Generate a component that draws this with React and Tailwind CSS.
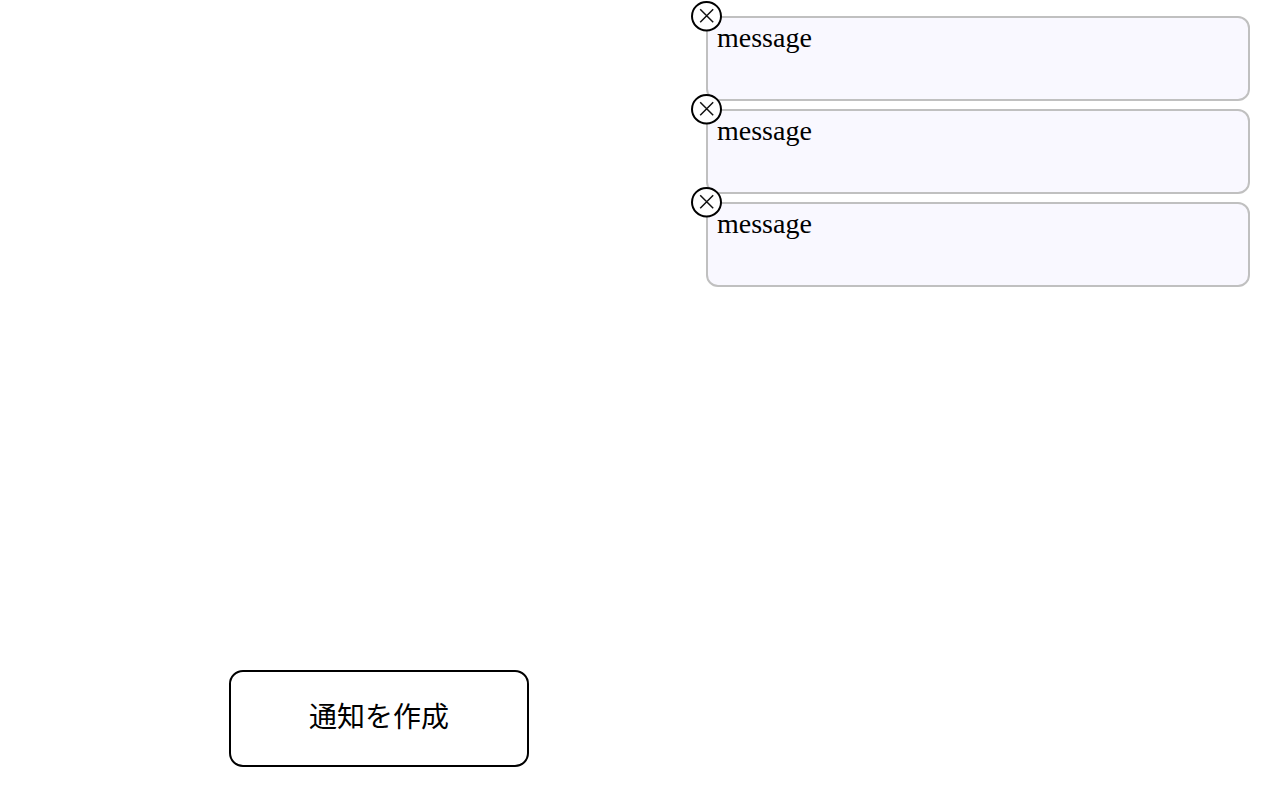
import React, { useState } from 'react';

const CloseIcon = () => (
  <svg viewBox="0 0 31 31" className="absolute inset-0 size-full" aria-hidden="true">
    <ellipse cx="15.5" cy="15.2" rx="14.5" ry="14.2" fill="#fff" stroke="#000" strokeWidth="2" />
    <path d="M9.2 8.2L22.2 21.2M22.2 8.2L9.2 21.2" fill="none" stroke="#111" strokeWidth="1.5" />
  </svg>
);

const Notification = ({ message, onClose }) => (
  <li className="relative h-[85px] rounded-xl border-2 border-[#c0c0c0] bg-[#f9f8ff] px-[9px] py-1">
    <button
      type="button"
      aria-label="close"
      onClick={onClose}
      className="absolute -top-[17px] -left-[17px] size-[31px] cursor-pointer rounded-full"
    >
      <CloseIcon />
    </button>
    <p>{message}</p>
  </li>
);

const App = () => {
  const [notifications, setNotifications] = useState([
    { id: 1, message: 'message' },
    { id: 2, message: 'message' },
    { id: 3, message: 'message' },
  ]);

  const create = () => {
    setNotifications((list) => [...list, { id: Date.now(), message: 'message' }]);
  };

  const remove = (id) => {
    setNotifications((list) => list.filter((item) => item.id !== id));
  };

  return (
    <main className="flex min-h-screen bg-white font-['Liberation_Serif','Noto_Sans_CJK_JP',serif] text-[28px] leading-8 text-black">
      <div className="flex flex-1 items-end justify-center pb-[33px] pl-[52px]">
        <button
          type="button"
          onClick={create}
          className="h-[97px] w-[300px] cursor-pointer rounded-[14px] border-2 border-black bg-white pb-0.5"
        >
          通知を作成
        </button>
      </div>

      {/* Notification list */}
      <ul className="mr-[30px] flex w-[42.5%] flex-col gap-2 pt-4">
        {notifications.map((item) => (
          <Notification key={item.id} message={item.message} onClose={() => remove(item.id)} />
        ))}
      </ul>
    </main>
  );
};

export default App;
